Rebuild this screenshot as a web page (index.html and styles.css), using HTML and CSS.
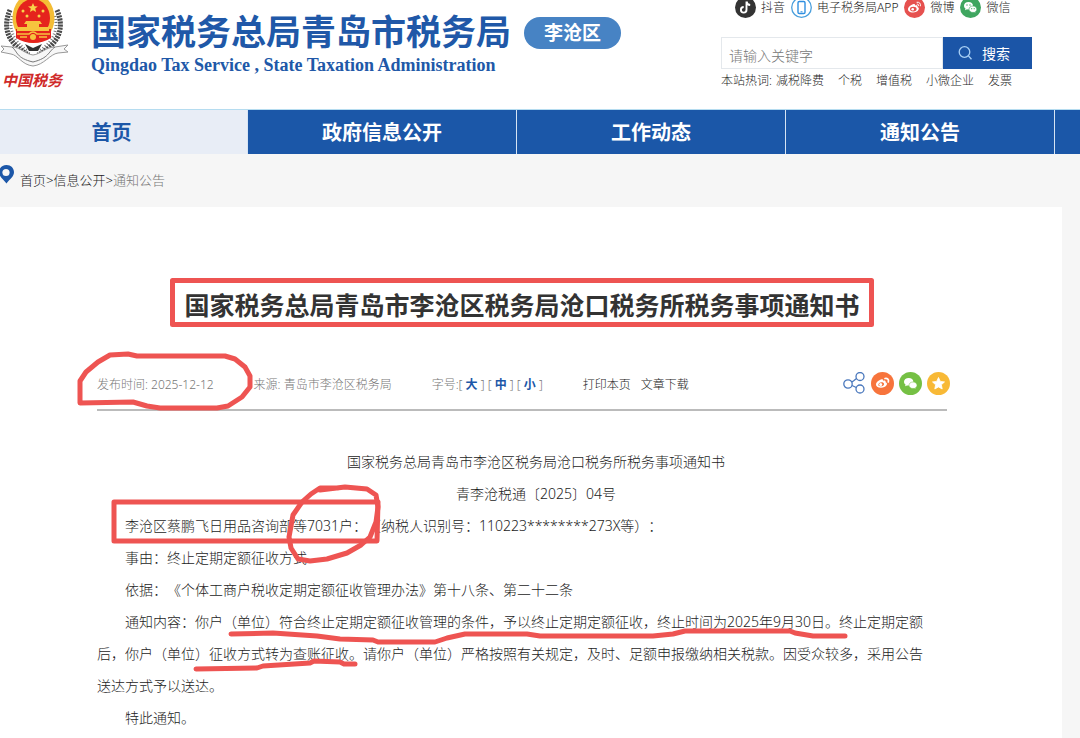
FILE: index.html
```html
<!DOCTYPE html>
<html lang="zh-CN">
<head>
    <meta charset="UTF-8">
    <meta name="viewport" content="width=device-width, initial-scale=1.0">
    <title>国家税务总局青岛市李沧区税务局沧口税务所税务事项通知书</title>
    <link rel="stylesheet" href="styles.css">
</head>
<body>
    <header class="header">
        <div class="brand">
            <div class="emblem">
                <svg width="70" height="68" viewBox="0 0 70 68" aria-hidden="true">
                    <!-- wheat ears -->
                    <g fill="none" stroke="#4a4a4a" stroke-width="5" stroke-dasharray="2 1">
                        <path d="M10 10C2 28 8 44 29 55"/>
                        <path d="M57 10C65 28 59 44 38 55"/>
                    </g>
                    <g fill="none" stroke="#777" stroke-width="3" stroke-dasharray="1 2">
                        <path d="M12 16C8 32 16 44 28 51"/>
                        <path d="M55 16C59 32 51 44 39 51"/>
                    </g>
                    <!-- ribbon -->
                    <path d="M1 46l11 1c8 0 13 7 21 8 8-1 13-8 22-8l13-2-4 4 4 3-10 1c-8 1-14 12-25 13C22 65 18 55 11 54L1 52l3-3z" fill="#f7f7f7" stroke="#999" stroke-width="1"/>
                    <path d="M12 47c6 5 4 11 21 15 16-4 15-10 22-15" fill="none" stroke="#777" stroke-width="1"/>
                    <path d="M25 44l8 4 9-4-4 7h-9z" fill="#333"/>
                    <!-- national emblem -->
                    <ellipse cx="33.500" cy="18" rx="21" ry="25" fill="#f4bd35"/>
                    <ellipse cx="33" cy="18" rx="17" ry="19" fill="#e5231d"/>
                    <path d="M16 29h35v9q-8 5-17.500 5T16 38z" fill="#e5231d"/>
                    <path d="M33 3l1.400 3.200 3.400.2-2.600 2.200.9 3.400-3.100-1.800-3 1.800.8-3.400L28 6.400l3.500-.2z" fill="#f8d34a"/>
                    <g fill="#f8d34a"><circle cx="23" cy="11" r="1.500"/><circle cx="43" cy="11" r="1.500"/><circle cx="27" cy="16" r="1.500"/><circle cx="39" cy="16" r="1.500"/></g>
                    <path d="M26 21h14l2 3h-3v3h10v4H17v-4h10v-3h-3z" fill="#f6c43e"/>
                    <path d="M17 34h12q4-4 8 0h13M20 37h7M39 37h8" fill="none" stroke="#f6c43e" stroke-width="1.500"/>
                    <circle cx="33" cy="37" r="3" fill="#f6c43e"/>
                </svg>
                <span class="emblem-text">中国税务</span>
            </div>
            <div class="brand-name">
                <span class="brand-cn">国家税务总局青岛市税务局</span>
                <span class="brand-en">Qingdao Tax Service , State Taxation Administration</span>
            </div>
            <span class="district">李沧区</span>
        </div>

        <div class="tools">
            <nav class="social">
                <a href="#">
                    <svg width="21" height="21" viewBox="0 0 21 21" aria-hidden="true">
                        <circle cx="10.500" cy="10.500" r="10.500" fill="#333"/>
                        <path d="M11.500 4.500v8.300a2.800 2.800 0 1 1-2.800-2.800M11.500 4.500c.3 2 1.600 3.300 3.700 3.500" fill="none" stroke="#fff" stroke-width="1.900"/>
                    </svg>
                    抖音
                </a>
                <a href="#">
                    <svg width="21" height="21" viewBox="0 0 21 21" aria-hidden="true">
                        <circle cx="10.500" cy="10.500" r="9.800" fill="#fff" stroke="#4a9fdc" stroke-width="1.300"/>
                        <rect x="7" y="4.500" width="7" height="12" rx="1.300" fill="#fff" stroke="#2f8fe0" stroke-width="1.400"/>
                        <path d="M9.500 14.800h2" stroke="#2f8fe0"/>
                    </svg>
                    电子税务局APP
                </a>
                <a href="#">
                    <svg width="21" height="21" viewBox="0 0 21 21" aria-hidden="true">
                        <circle cx="10.500" cy="10.500" r="10.500" fill="#e6514f"/>
                        <path d="M9 7.300c1.200-.5 2.200-.1 2 1.200 1.700-.6 3 0 2.500 1.500 1.300.5 1.700 1.500 1 2.800-.9 1.800-3.300 2.900-5.700 2.800-2.800-.1-5-1.500-4.800-3.500C4.200 10 7 7.900 9 7.300z" fill="#fff"/>
                        <ellipse cx="9.300" cy="12.100" rx="3.300" ry="2.300" fill="#e6514f"/>
                        <circle cx="8.700" cy="12.300" r="1.300" fill="#fff"/>
                        <path d="M13 5.200c2.400-.4 4 1.400 3.400 3.700M13.200 7.100c1.100-.1 1.600.6 1.400 1.600" fill="none" stroke="#fff" stroke-linecap="round"/>
                    </svg>
                    微博
                </a>
                <a href="#">
                    <svg width="21" height="21" viewBox="0 0 21 21" aria-hidden="true">
                        <circle cx="10.500" cy="10.500" r="10.500" fill="#3fa660"/>
                        <path d="M8.500 5C5.700 5 4 6.700 4 8.700c0 1.200.6 2.200 1.500 2.900L5 13.200l2-.9c.5.100 1 .2 1.600.2C11.300 12.400 13 10.700 13 8.700S11.300 5 8.500 5z" fill="#fff"/>
                        <path d="M13 9c-2.300 0-4 1.400-4 3.200s1.700 3.300 4 3.300l1.200-.2 1.600.8-.4-1.400c.8-.6 1.400-1.500 1.400-2.500C16.800 10.400 15.200 9 13 9z" fill="#fff" stroke="#3fa660" stroke-width=".6"/>
                        <g fill="#3fa660"><circle cx="7" cy="8" r=".7"/><circle cx="10" cy="8" r=".7"/><circle cx="11.700" cy="11.700" r=".6"/><circle cx="14.200" cy="11.700" r=".6"/></g>
                    </svg>
                    微信
                </a>
            </nav>
            <form class="search" onsubmit="return false">
                <input type="text" aria-label="请输入关键字" placeholder="请输入关键字">
                <button type="submit">
                    <svg width="14" height="14" viewBox="0 0 14 14" aria-hidden="true">
                        <circle cx="6.500" cy="6" r="5.300" fill="none" stroke="#a9d0f5" stroke-width="1.300"/>
                        <path d="M10.500 10l3 3.200" stroke="#a9d0f5" stroke-width="1.300"/>
                    </svg>
                    搜索
                </button>
            </form>
            <div class="hot">
                <span>本站热词:</span>
                <a href="#">减税降费</a>
                <a href="#">个税</a>
                <a href="#">增值税</a>
                <a href="#">小微企业</a>
                <a href="#">发票</a>
            </div>
        </div>
    </header>

    <nav class="menu">
        <a class="active" href="#">首页</a>
        <a href="#">政府信息公开</a>
        <a href="#">工作动态</a>
        <a href="#">通知公告</a>
        <span class="menu-rest"></span>
    </nav>

    <div class="crumbs">
        <svg width="14" height="19" viewBox="0 0 14 19" aria-hidden="true">
            <path d="M6.500 0C2 0-1 3.200-1 7.200c0 4.500 4.500 7 7.500 11.300C9.500 14.200 14 11.700 14 7.200 14 3.200 11 0 6.500 0z" fill="#1c57a8"/>
            <circle cx="6" cy="7.500" r="3.600" fill="#f6f6f6"/>
        </svg>
        <p><a href="#">首页</a>&gt;<a href="#">信息公开</a>&gt;<span>通知公告</span></p>
    </div>

    <main class="article">
        <div class="article-inner">
            <h1>国家税务总局青岛市李沧区税务局沧口税务所税务事项通知书</h1>
            <div class="meta">
                <span>发布时间: 2025-12-12</span>
                <span>来源: 青岛市李沧区税务局</span>
                <span class="font-size">字号:[ <button type="button">大</button> ] [ <button type="button">中</button> ] [ <button type="button">小</button> ]</span>
                <span class="actions"><a href="#">打印本页</a><a href="#">文章下载</a></span>
                <span class="share">
                    <a href="#" aria-label="分享">
                        <svg width="23" height="23" viewBox="0 0 23 23">
                            <g fill="none" stroke="#4a78bd" stroke-width="1.300">
                                <circle cx="5" cy="12" r="4.200"/><circle cx="17" cy="4.500" r="4"/><circle cx="17" cy="17" r="4"/>
                                <path d="M9 10l2-1.500 2.500-2M9 13.500l4.300 2"/>
                            </g>
                        </svg>
                    </a>
                    <a href="#" aria-label="微博">
                        <svg width="23" height="23" viewBox="0 0 23 23">
                            <circle cx="11.500" cy="11.500" r="11.500" fill="#f7743c"/>
                            <path d="M10 7.500c1.400-.5 2.200 0 2 1.200 1.800-.6 3 .1 2.600 1.500 1.400.5 1.700 1.500 1 2.800-1 1.800-3.400 2.900-5.800 2.800-2.900-.1-5-1.500-4.800-3.500C5.100 10.400 8 8 10 7.500z" fill="#fff"/>
                            <path d="M7.300 13.200c-.3-3.500 5.700-3.900 5.800-1.300.1 2.300-4.300 3.400-5.800 1.300z" fill="#f7743c"/>
                            <circle cx="9.700" cy="12.600" r="1.500" fill="#fff"/>
                            <path d="M14 6.500c2.500-.5 4 1.200 3.300 3.500" fill="none" stroke="#fff" stroke-width="1.700" stroke-linecap="round"/>
                        </svg>
                    </a>
                    <a href="#" aria-label="微信">
                        <svg width="23" height="23" viewBox="0 0 23 23">
                            <circle cx="11.500" cy="11.500" r="11.500" fill="#75c044"/>
                            <path d="M9.700 6C7 6 5 7.600 5 9.800c0 1.200.6 2.200 1.600 2.900L6 14.300l2-.9 1.700.2c2.700 0 4.700-1.600 4.700-3.800S12.400 6 9.700 6z" fill="#fff"/>
                            <path d="M14 10c-2.400 0-4 1.400-4 3.200s1.600 3.300 4 3.300l1.200-.2 1.700.8-.4-1.400c.9-.6 1.500-1.500 1.500-2.500C18 11.400 16.400 10 14 10z" fill="#fff" stroke="#75c044" stroke-width=".5"/>
                        </svg>
                    </a>
                    <a href="#" aria-label="收藏">
                        <svg width="23" height="23" viewBox="0 0 23 23">
                            <circle cx="11.500" cy="11.500" r="11.500" fill="#f8b936"/>
                            <path d="M11.500 5.500l1.800 3.900 4.200.5-3.100 2.900.8 4.200-3.700-2.100L7.800 17l.8-4.200-3.100-2.900 4.200-.5z" fill="#fff" stroke="#fff" stroke-width=".8" stroke-linejoin="round"/>
                        </svg>
                    </a>
                </span>
            </div>
            <div class="content">
                <p class="center">国家税务总局青岛市李沧区税务局沧口税务所税务事项通知书</p>
                <p class="center">青李沧税通〔2025〕04号</p>
                <p>李沧区蔡鹏飞日用品咨询部等7031户：（纳税人识别号：110223********273X等）：</p>
                <p>事由：终止定期定额征收方式</p>
                <p>依据：《个体工商户税收定期定额征收管理办法》第十八条、第二十二条</p>
                <p>通知内容：你户（单位）符合终止定期定额征收管理的条件，予以终止定期定额征收，终止时间为2025年9月30日。终止定期定额后，你户（单位）征收方式转为查账征收。请你户（单位）严格按照有关规定，及时、足额申报缴纳相关税款。因受众较多，采用公告送达方式予以送达。</p>
                <p>特此通知。</p>
            </div>
        </div>

        <!-- red pen marks over the text -->
        <svg class="marks" width="1062" height="531" viewBox="0 207 1062 531" aria-hidden="true">
            <rect x="172.500" y="280.500" width="699" height="44"/>
            <path d="M80 403L80 381L86 372L98 362L110 355L128 354L137 356H225L235 359L245 367L250 376L250 387L242 397L228 406L217 408H160L147 406L133 402Z"/>
            <path d="M114 502H378L377 541H114Z"/>
            <path d="M320 490L345 487L367 489L376 495L378 507L376 522L370 537L361 545L347 553L327 559L310 561L298 559L291 548L289 537L293 515L302 502L311 494L320 488H338"/>
            <path d="M231 634L273 633L317 636L340 639L373 640L378 642H435L447 638L465 634L527 634L540 636H653L673 634L685 631H790L795 633L813 636H845"/>
            <path d="M196 669L257 668L263 666L310 663L314 661L340 662L344 664H355"/>
        </svg>
    </main>
</body>
</html>
```
FILE: styles.css
```css
* {
    box-sizing: border-box;
}
body {
    margin: 0;
    min-height: 100vh;
    display: flex;
    flex-direction: column;
    font-family: "Noto Sans", "Noto Sans CJK SC", sans-serif;
    font-size: 12px;
    font-weight: 300;
    text-spacing-trim: space-all;
    color: #1c1c1c;
    background-color: #f6f6f6;
}
a {
    color: inherit;
    text-decoration: none;
}
svg {
    display: block;
    flex: none;
}
p {
    margin: 0;
}

/* header */
.header {
    display: flex;
    justify-content: space-between;
    height: 110px;
    padding-right: 48px;
    background: #fff;
    border-bottom: 1px solid #b5dcf0;
    overflow: hidden;
}
.brand {
    display: flex;
    align-items: flex-start;
    white-space: nowrap;
}
.emblem {
    width: 91px;
}
.emblem-text {
    display: block;
    padding-left: 2px;
    font-size: 15px;
    font-style: italic;
    font-weight: bold;
    line-height: 24px;
    color: #cf2a2a;
}
.brand-name {
    display: flex;
    flex-direction: column;
    padding-top: 10px;
    color: #2058a8;
}
.brand-cn {
    font-size: 35px;
    font-weight: bold;
    line-height: 43px;
}
.brand-en {
    font-family: "Liberation Serif", serif;
    font-size: 18px;
    font-weight: bold;
    line-height: 24px;
}
.district {
    margin: 17px 0 0 13px;
    padding: 1px 20px 0;
    border-radius: 16px;
    font-size: 19px;
    font-weight: bold;
    line-height: 31px;
    color: #fff;
    background: #4783c4;
}
.tools {
    width: 311px;
}
.social {
    display: flex;
    gap: 6px;
    margin-top: -3px;
    padding-left: 14px;
    white-space: nowrap;
}
.social a {
    display: flex;
    align-items: center;
    gap: 5px;
    line-height: 21px;
}
.search {
    display: flex;
    height: 32px;
    margin-top: 19px;
}
.search input {
    flex: 1;
    min-width: 0;
    padding: 4px 7px 0;
    border: 1px solid #e4e8ec;
    font-family: inherit;
    font-size: 14px;
    font-weight: 300;
    color: #1c1c1c;
}
.search input::placeholder {
    color: #777;
}
.search button {
    display: flex;
    align-items: center;
    gap: 10px;
    width: 89px;
    padding: 0 0 0 15px;
    border: none;
    font-family: inherit;
    font-size: 14px;
    color: #fff;
    background: #1b55a7;
    cursor: pointer;
}
.hot {
    display: flex;
    gap: 14px;
    line-height: 24px;
    white-space: nowrap;
}
.hot span {
    margin-right: -10px;
}

/* main menu */
.menu {
    display: grid;
    grid-template-columns: 248fr 269fr 269fr 269fr 25fr;
    background: #1b57a8;
}
.menu a {
    padding-top: 1px;
    border-right: 1px solid #d6e4f4;
    font-size: 20px;
    font-weight: bold;
    line-height: 43px;
    text-align: center;
    color: #fff;
}
.menu .active {
    padding-right: 24px;
    color: #1c57a8;
    background: #e8edf6;
}

/* breadcrumb */
.crumbs {
    display: flex;
    align-items: flex-start;
    gap: 6px;
    height: 53px;
    padding-top: 11px;
}
.crumbs p {
    font-size: 13px;
    line-height: 30px;
}
.crumbs span {
    color: #777;
}

/* article */
.article {
    position: relative;
    flex: 1;
    margin-right: 18px;
    padding: 78px 115px 3px 97px;
    background: #fff;
}
h1 {
    margin: 0;
    font-size: 25px;
    line-height: 40px;
    text-align: center;
    white-space: nowrap;
    color: #333;
}
.meta {
    display: flex;
    align-items: center;
    gap: 40px;
    margin-top: 47px;
    padding-bottom: 14px;
    border-bottom: 2px solid #bbb;
    white-space: nowrap;
    color: #777;
}
.font-size button {
    padding: 0;
    border: none;
    font-family: inherit;
    font-size: 12px;
    font-weight: bold;
    color: #1c57a8;
    background: none;
    cursor: pointer;
}
.actions {
    display: flex;
    gap: 10px;
    color: #1c1c1c;
}
.share {
    display: flex;
    gap: 5px;
    margin-left: auto;
    margin-right: -3px;
}
.content {
    margin-top: 35px;
    font-size: 14px;
    line-height: 32px;
}
.content p {
    padding-right: 12px;
    text-indent: 2em;
}
.content .center {
    padding-right: 0;
    text-align: center;
}
.marks {
    position: absolute;
    top: 0;
    left: 0;
    fill: none;
    stroke: #ee5452;
    stroke-width: 5px;
    stroke-linejoin: round;
    stroke-linecap: round;
    pointer-events: none;
}
```
